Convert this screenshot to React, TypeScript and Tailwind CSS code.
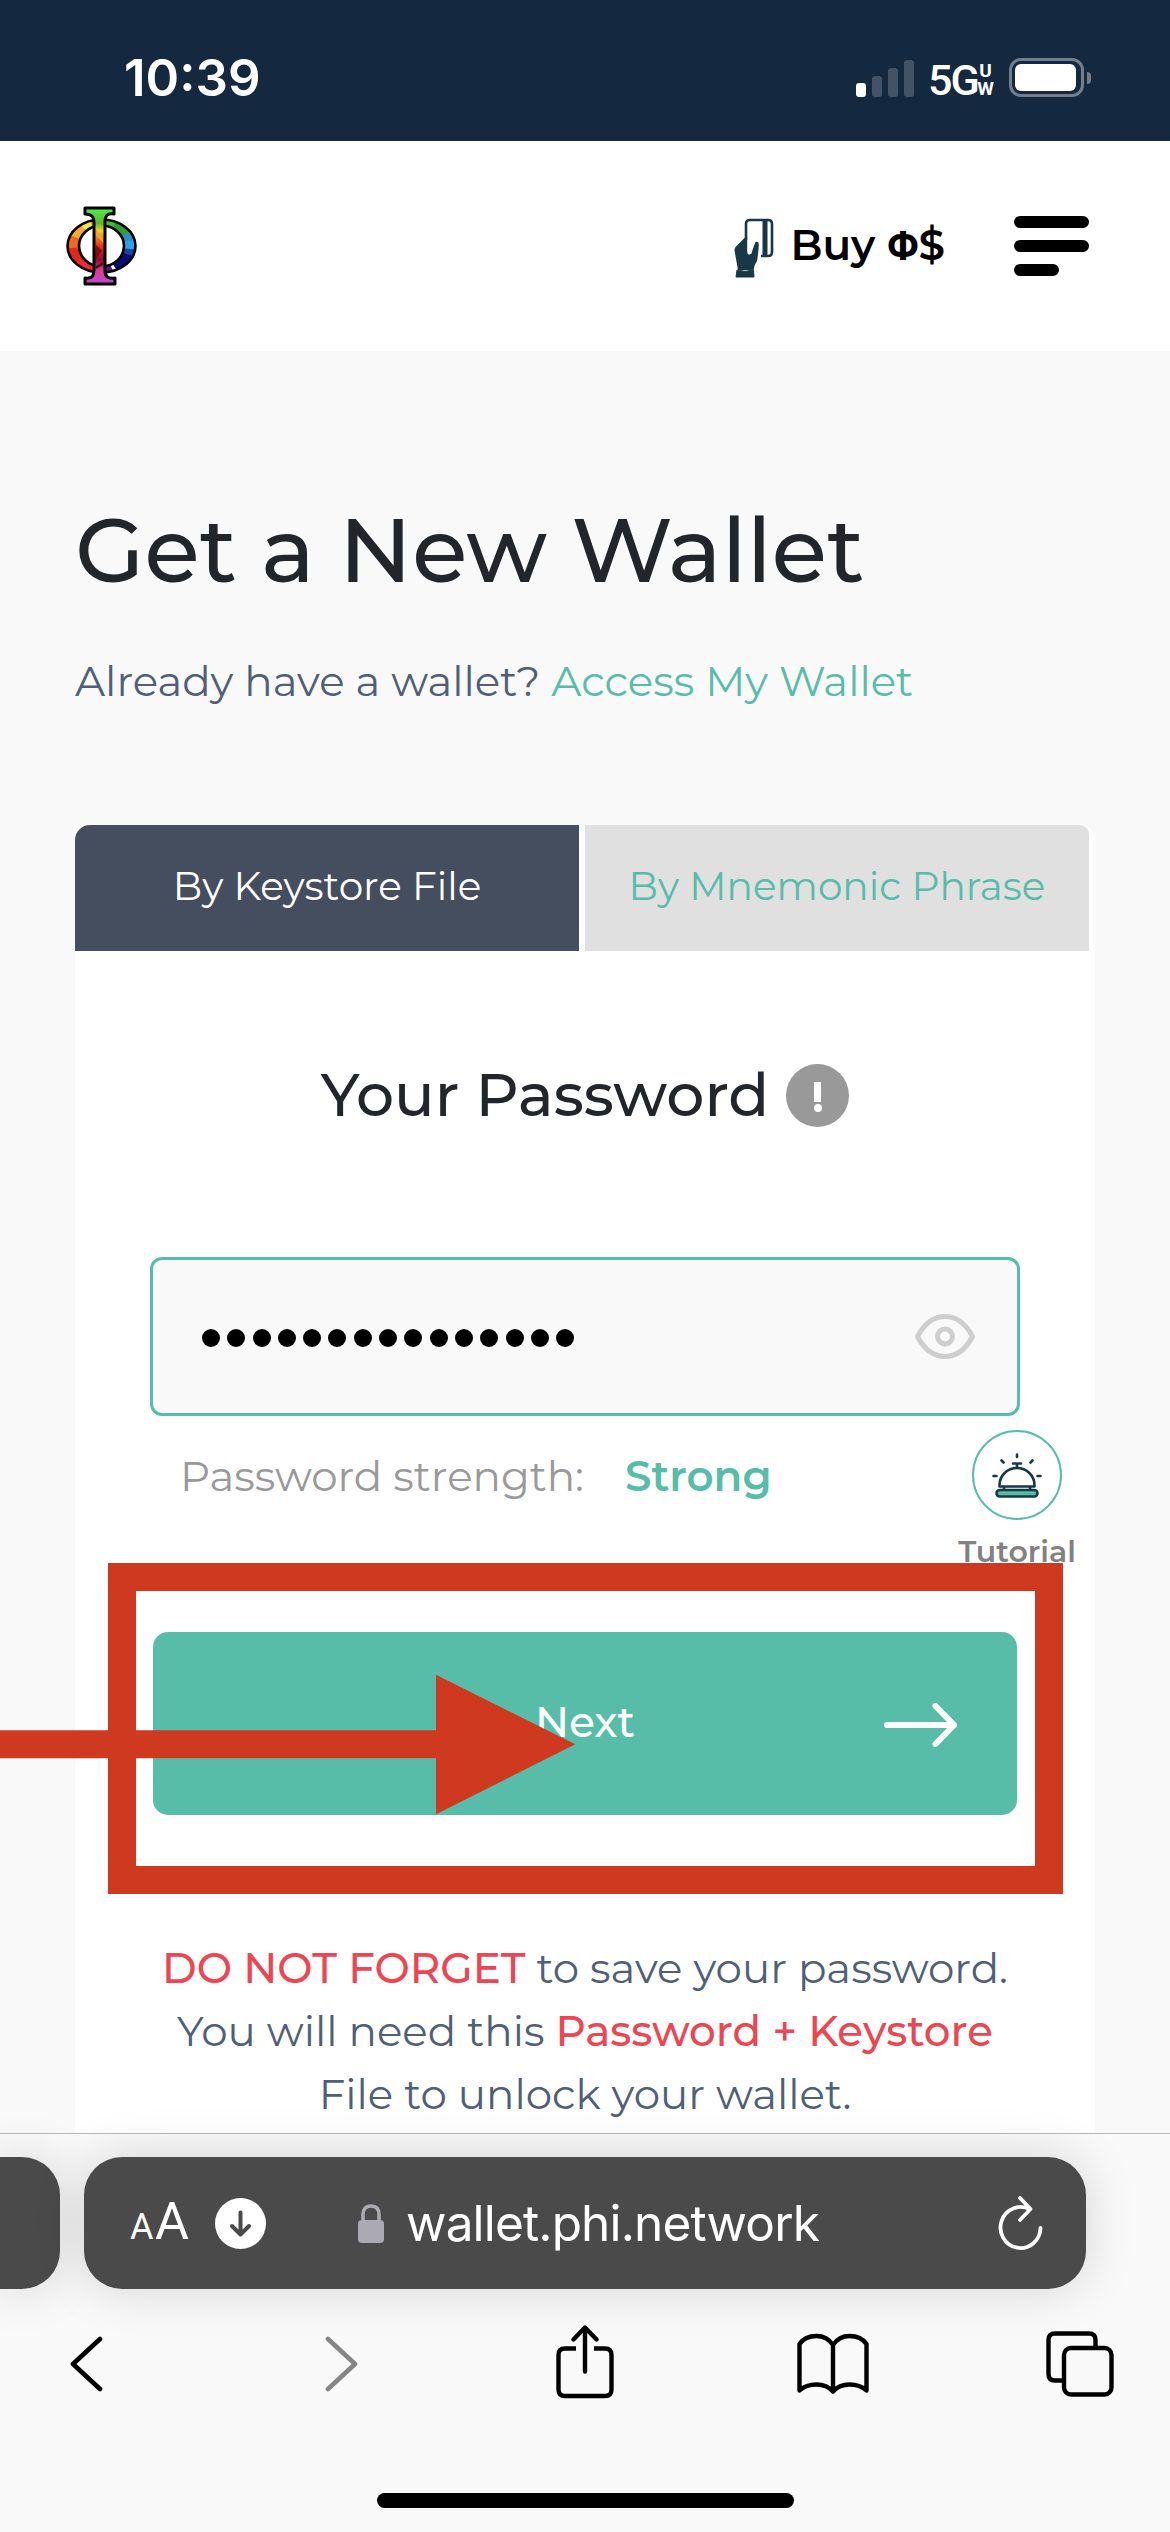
import React from "react";

function PhiLogo() {
  const stem = "M20 3H49V9C41 8 40 12 40 17V65C40 71 42 74 50 73V79H20V73C28 74 29 70 29 65V17C29 12 27 9 20 9Z";
  const wedges: [string, string][] = [
    ["M36 41V-10H46Z", "#4fc52f"],
    ["M36 41L44 -10L66 0Z", "#45bf35"],
    ["M36 41L60 2L84 24Z", "#2f9d3a"],
    ["M36 41L84 18V36Z", "#2b8fc4"],
    ["M36 41L84 32V48Z", "#2fa0ea"],
    ["M36 41L84 46V62Z", "#1247a0"],
    ["M36 41L84 56L64 84Z", "#0b0b78"],
    ["M36 41L60 90H36Z", "#5c1b8c"],
    ["M36 41V90H18Z", "#e53aa0"],
    ["M36 41L22 90L-4 66Z", "#ee2a3c"],
    ["M36 41L-4 70V38Z", "#e2281b"],
    ["M36 41L-10 44V24Z", "#ee6a22"],
    ["M36 41L-8 26L6 6Z", "#f9a832"],
    ["M36 41L4 8L18 -6Z", "#fbe83c"],
    ["M36 41L16 -4L36 -10Z", "#c9b52b"],
  ];
  return (
    <svg className="h-[82px] w-[74px]" viewBox="0 0 74 82" fill="none">
      <defs>
        <clipPath id="phiRing">
          <path clipRule="evenodd" d="M36.500 14.500A33.500 26.500 0 1 0 36.600 14.500ZM36.500 21A22.500 20.500 0 1 1 36.400 21Z" />
        </clipPath>
        <linearGradient id="phiStem" x1="0" y1="3" x2="0" y2="79" gradientUnits="userSpaceOnUse">
          <stop offset="0" stopColor="#52f04c" />
          <stop offset=".2" stopColor="#5bb52b" />
          <stop offset=".3" stopColor="#f5cf35" />
          <stop offset=".42" stopColor="#f0641e" />
          <stop offset=".55" stopColor="#d3201b" />
          <stop offset=".68" stopColor="#8d1030" />
          <stop offset=".82" stopColor="#df3c92" />
          <stop offset="1" stopColor="#b44ccf" />
        </linearGradient>
      </defs>
      <g clipPath="url(#phiRing)">
        {wedges.map(([d, fill]) => (
          <path key={d} d={d} fill={fill} />
        ))}
      </g>
      <ellipse cx="36.500" cy="41" rx="34" ry="26.500" stroke="#000" strokeWidth="2.600" />
      <ellipse cx="36.500" cy="41" rx="22.500" ry="20.500" stroke="#000" strokeWidth="2.600" />
      <path d={stem} fill="url(#phiStem)" stroke="#000" strokeWidth="3" strokeLinejoin="round" />
      <path d="M31 24L38 33V38L31 30Z" fill="#f6a12a" />
      <path d="M31 40L37 46L31 54Z" fill="#7c0d14" />
      <path d="M31 61L38 57V60L31 64Z" fill="#4a0a1c" />
    </svg>
  );
}

function HandCard() {
  return (
    <svg className="mt-[3px] h-[60px] w-[40px]" viewBox="0 0 40 60" fill="none">
      <path d="M12 22V6Q12 2 16 2H34Q38 2 38 6V34Q38 38 34 38H27" stroke="#173844" strokeWidth="2.600" />
      <rect x="28.500" y="2" width="5" height="35" fill="#173844" />
      <path d="M11 19.500L1.500 29Q0 31 .8 34L4 52H19.500Q20 47 23 43Q24.500 35 24.800 26Q24.500 23 21.500 24Q18.500 31 17.500 35.500Q13 39 13.200 32V19Z" fill="#173844" />
      <path d="M3 52Q11 54.500 19.500 52L20 59H2Z" fill="#173844" stroke="#173844" strokeWidth="1" strokeLinejoin="round" />
    </svg>
  );
}

function StatusBar() {
  return (
    <div className="flex h-[141px] shrink-0 items-center bg-[#14283f] pt-[14px] pl-[124px] font-[Inter] text-white">
      <span className="text-[51px] leading-[60px] font-semibold">10:39</span>
      <div className="ml-auto flex h-[40px] w-[314px] items-center">
        <div className="flex h-[38px] items-end gap-[6px]">
          <div className="h-[14px] w-[10px] rounded-[3px] bg-white" />
          <div className="h-[21px] w-[10px] rounded-[3px] bg-[#435265]" />
          <div className="h-[29px] w-[10px] rounded-[3px] bg-[#435265]" />
          <div className="h-[37px] w-[10px] rounded-[3px] bg-[#435265]" />
        </div>
        <div className="mt-[4px] ml-[14px] flex w-[66px] items-center font-[Roboto]">
          <span className="w-[49px] text-[43px] leading-[44px] font-medium tracking-[-2px]">5G</span>
          <div className="flex w-[17px] flex-col items-center text-[19px] leading-[18px] font-bold">
            <span>U</span>
            <span>W</span>
          </div>
        </div>
        <div className="ml-[15px] h-[39px] w-[75px] shrink-0 rounded-[12px] border-[3px] border-[#727e8c] p-[3px]">
          <div className="h-[27px] w-[61px] rounded-[6px] bg-white" />
        </div>
        <div className="ml-[3px] h-[12px] w-[4px] shrink-0 rounded-r-full bg-[#727e8c]" />
      </div>
    </div>
  );
}

function NavBar() {
  return (
    <div className="flex h-[210px] shrink-0 items-center bg-white pr-[81px] pl-[65px]">
      <PhiLogo />
      <div className="ml-auto flex items-center">
        <HandCard />
        <span className="mb-px ml-[16px] text-[42px] leading-[60px] font-semibold whitespace-pre text-black">
          Buy <span className="font-[Roboto] text-[41px] font-bold">Φ</span>$
        </span>
        <div className="ml-[69px] flex w-[75px] flex-col gap-3">
          <div className="h-3 w-[75px] rounded-full bg-black" />
          <div className="h-3 w-[75px] rounded-full bg-black" />
          <div className="h-3 w-[45px] rounded-full bg-black" />
        </div>
      </div>
    </div>
  );
}

function BellIcon() {
  return (
    <svg className="h-[45px] w-[50px]" viewBox="0 0 50 45" fill="none" stroke="#173844" strokeWidth="2.600" strokeLinecap="round">
      <path d="M25 1.500V4M9.500 7.500L11.500 9.500M40.500 7.500L38.500 9.500M1.500 23H4.500M45.500 23H48.500M21 10.500H29M25 10.500V15" />
      <path d="M7.500 33.500V32A17.500 17 0 0 1 42.500 32V33.500Z" strokeLinejoin="round" />
      <path d="M12 34V37M38 34V37" />
      <rect x="4.500" y="37" width="41" height="6.500" rx="3.250" fill="#58bda8" />
    </svg>
  );
}

function Tutorial() {
  return (
    <div className="absolute top-[1430px] left-[957px] flex w-[120px] flex-col items-center">
      <div className="flex h-[90px] w-[90px] items-center justify-center rounded-full border-2 border-[#58bda8] bg-white">
        <BellIcon />
      </div>
      <span className="mt-[14px] text-[30px] leading-[36px] font-semibold text-[#818181]">Tutorial</span>
    </div>
  );
}

function WalletCard() {
  return (
    <div className="mt-[114px] flex h-[1400px] w-[1020px] flex-col rounded-t-[15px] bg-white">
      <div className="flex h-[126px] shrink-0 gap-[6px] text-[39px] leading-[48px]">
        <div className="flex w-[504px] items-center justify-center rounded-tl-[15px] bg-[#454e5f] pb-[4px] text-white">By Keystore File</div>
        <div className="flex w-[504px] items-center justify-center rounded-tr-[9px] bg-[#e0e0e0] pb-[4px] text-[#58bda8]">By Mnemonic Phrase</div>
      </div>
      <div className="mt-[112px] flex h-[64px] items-center justify-center gap-[17px]">
        <h2 className="text-[60px] leading-[64px] font-medium text-[#22262b]">Your Password</h2>
        <div className="flex h-[63px] w-[63px] flex-col items-center justify-center gap-[2px] rounded-full bg-[#999999]">
          <div className="mt-[4px] h-[20px] w-[7px] bg-white" />
          <div className="h-[8px] w-[8px] rounded-full bg-white" />
        </div>
      </div>
      <div className="mt-[130px] ml-[75px] flex h-[159px] w-[870px] shrink-0 items-center rounded-[12px] border-[3px] border-[#58bda8] bg-[#f9f9f9] pr-[42px] pl-[49px]">
        <div className="mt-[3px] flex gap-[7.300px]">
          {Array.from({ length: 15 }, (_, i) => (
            <span key={i} className="h-[18px] w-[18px] rounded-full bg-black" />
          ))}
        </div>
        <svg className="ml-auto h-[45px] w-[60px]" viewBox="0 0 60 45" fill="none" stroke="#cecece" strokeWidth="5">
          <path d="M2.500 22.500Q13 2.500 30 2.500T57.500 22.500Q47 42.500 30 42.500T2.500 22.500Z" strokeLinejoin="round" />
          <circle cx="30" cy="22.500" r="7.500" />
        </svg>
      </div>
      <div className="mt-[30px] flex h-[60px] items-center pl-[105px] text-[42px] leading-[60px]">
        <span className="text-[#999999]">Password strength:</span>
        <span className="ml-[41px] font-semibold text-[#58bda8]">Strong</span>
      </div>
      <div className="mt-[126px] ml-[78px] grid h-[183px] w-[864px] shrink-0 grid-cols-3 items-center rounded-[15px] bg-[#58bda8] text-white">
        <span className="col-start-2 pb-[3px] text-center text-[42px] leading-[48px] font-medium">Next</span>
        <svg className="mt-[3px] mr-[60px] ml-auto h-[44px] w-[73px]" viewBox="0 0 73 44" fill="none" stroke="#fff" strokeWidth="6" strokeLinecap="round" strokeLinejoin="round">
          <path d="M3 22H70M51.500 3L70 22L51.500 41" />
        </svg>
      </div>
      <p className="mt-[122px] text-center text-[42px] leading-[63px] text-[#505f77]">
        <span className="font-medium text-[#ec4653]">DO NOT FORGET</span> to save your password.
        <br />
        You will need this <span className="font-medium text-[#ec4653]">Password + Keystore</span>
        <br />
        File to unlock your wallet.
      </p>
    </div>
  );
}

function Annotation() {
  return (
    <>
      <div className="absolute top-[1563px] left-[107.500px] h-[331.300px] w-[955px] border-[28px] border-[#cf3920]" />
      <svg className="absolute top-[1674px] left-0 h-[141px] w-[576px]" viewBox="0 0 576 141" fill="#cf3920">
        <path d="M0 56.300H436V.7L575.300 70.300L436 140.300V84.300H0Z" />
      </svg>
    </>
  );
}

function BrowserChrome() {
  return (
    <div className="relative flex h-[399px] shrink-0 flex-col border-t border-[#b8b8b8] bg-[#f9f9f9]">
      <div className="mt-[23px] flex h-[132px] gap-[24px] font-[Inter] text-white">
        <div className="h-[132px] w-[60px] rounded-r-[38px] bg-[#4a4a4a] shadow-[0_0_50px_rgba(0,0,0,0.15)]" />
        <div className="flex w-[1002px] items-center rounded-[38px] bg-[#4a4a4a] pr-[43px] pl-[46px] shadow-[0_0_50px_rgba(0,0,0,0.15)]">
          <div className="mt-[2px] flex w-[59px] items-baseline justify-between font-[Roboto] leading-[60px]">
            <span className="text-[36px]">A</span>
            <span className="text-[52px]">A</span>
          </div>
          <svg className="ml-[26px] h-[51px] w-[51px]" viewBox="0 0 51 51" fill="none">
            <circle cx="25.500" cy="25.500" r="25.500" fill="#fff" />
            <path d="M25.500 14.500V36M17 28L25.500 36.500L34 28" stroke="#4a4a4a" strokeWidth="4" strokeLinecap="round" strokeLinejoin="round" />
          </svg>
          <svg className="ml-[92px] h-[39px] w-[26px]" viewBox="0 0 26 39" fill="none">
            <rect y="16" width="26" height="23" rx="4" fill="#aba9b1" />
            <path d="M5 18V10.500Q5 2 13 2T21 10.500V18" stroke="#aba9b1" strokeWidth="3.600" />
          </svg>
          <span className="ml-[22px] text-[49.500px] leading-[60px] tracking-[-0.850px]">wallet.phi.network</span>
          <svg className="ml-auto h-[55px] w-[45px]" viewBox="0 0 45 55" fill="none" stroke="#fff" strokeWidth="3.800" strokeLinecap="round" strokeLinejoin="round">
            <path d="M42.500 32A20 20.500 0 1 1 32 13.500M22 2L32.500 13L22 24" />
          </svg>
        </div>
      </div>
      <div className="mt-[37px] flex h-[76px] items-center pl-[70px]">
        <svg className="h-[56px] w-[33px]" viewBox="0 0 33 56" fill="none" stroke="#000" strokeWidth="4.600" strokeLinecap="round" strokeLinejoin="round">
          <path d="M30 3L3 28L30 53" />
        </svg>
        <svg className="ml-[222px] h-[56px] w-[33px]" viewBox="0 0 33 56" fill="none" stroke="#868686" strokeWidth="4.600" strokeLinecap="round" strokeLinejoin="round">
          <path d="M3 3L30 28L3 53" />
        </svg>
        <svg className="mb-1 ml-[198px] h-[74px] w-[58px]" viewBox="0 0 58 74" fill="none" stroke="#000" strokeWidth="4.400" strokeLinecap="round" strokeLinejoin="round">
          <path d="M20 23.500H9Q2.500 23.500 2.500 30V64.500Q2.500 71 9 71H49Q55.500 71 55.500 64.500V30Q55.500 23.500 49 23.500H38" strokeLinecap="butt" />
          <path d="M29 46.500V3M17.500 14.500L29 2.500L40.500 14.500" />
        </svg>
        <svg className="ml-[183px] h-[62px] w-[72px]" viewBox="0 0 72 62" fill="none" stroke="#000" strokeWidth="4.400" strokeLinecap="round" strokeLinejoin="round">
          <path d="M36 12Q30 3 19.500 3Q8 3 2.500 11V57.500Q9 51.500 19.500 51.500Q30 51.500 36 58.500Q42 51.500 52.500 51.500Q63 51.500 69.500 57.500V11Q64 3 52.500 3Q42 3 36 12V58.500" />
        </svg>
        <svg className="ml-[177px] h-[66px] w-[68px]" viewBox="0 0 68 66" fill="none" stroke="#000" strokeWidth="4.400">
          <path d="M49.500 15V9Q49.500 2.500 43 2.500H9Q2.500 2.500 2.500 9V43Q2.500 49.500 9 49.500H16" />
          <rect x="18" y="17" width="47.500" height="46.500" rx="7" />
        </svg>
      </div>
      <div className="mx-auto mt-[91px] h-[15px] w-[417px] rounded-full bg-black" />
    </div>
  );
}

export default function App() {
  return (
    <div className="relative flex h-[2532px] w-[1170px] flex-col overflow-hidden bg-[#f9f9f9] font-[Montserrat,Inter,sans-serif]">
      <StatusBar />
      <NavBar />
      <main className="flex min-h-0 flex-1 flex-col overflow-hidden pt-[144px] pl-[75px]">
        <h1 className="text-[90px] leading-[110px] font-medium text-[#22262b]">Get a New Wallet</h1>
        <p className="mt-[46px] text-[42px] leading-[60px] text-[#505f77]">
          Already have a wallet? <span className="text-[#58bda8]">Access My Wallet</span>
        </p>
        <WalletCard />
      </main>
      <BrowserChrome />
      <Tutorial />
      <Annotation />
    </div>
  );
}
